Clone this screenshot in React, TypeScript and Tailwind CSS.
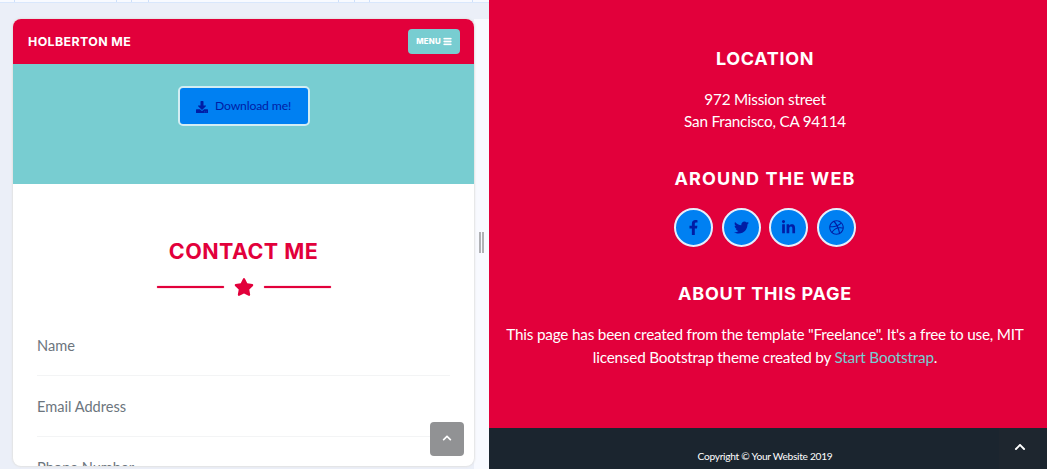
import React from "react";
import { FaBars, FaChevronUp, FaDownload, FaDribbble, FaFacebookF, FaLinkedinIn, FaStar, FaTwitter } from "react-icons/fa";

const socials = [FaFacebookF, FaTwitter, FaLinkedinIn, FaDribbble];

function RulerBar() {
  return (
    <div className="flex h-[3px] w-full border-b border-[#d9e7fc] bg-[#f8faff]">
      <div className="w-[15px] border-r border-[#cfe0fa]" />
      <div className="w-[102px] border-r border-[#cfe0fa]" />
      <div className="w-[15px] border-r border-[#cfe0fa]" />
      <div className="w-[17px] border-r border-[#cfe0fa]" />
      <div className="w-[190px] border-r border-[#cfe0fa]" />
      <div className="w-[16px] border-r border-[#cfe0fa]" />
      <div className="w-[15px] border-r border-[#cfe0fa]" />
      <div className="w-[103px] border-r border-[#cfe0fa]" />
    </div>
  );
}

function Field({ label }: { label: string }) {
  return (
    <div className="h-[61px] border-b border-[#f3f4f5] pt-[20px] text-[14.6px] leading-[22px] text-[#6c757d]">{label}</div>
  );
}

function PhonePreview() {
  return (
    <div className="relative ml-[13px] flex h-[447px] w-[461px] shrink-0 flex-col overflow-hidden rounded-[8px] bg-white shadow-[0_0_2px_1px_#e2e2e2]">
      <header className="flex h-[45px] shrink-0 items-center justify-between bg-[#e2003b] pr-[14px] pl-[15px]">
        <span className="pt-px font-[Inter] text-[12.4px] font-bold tracking-[0.38px] text-white">HOLBERTON ME</span>
        <button className="flex h-[25px] w-[52px] items-center justify-center gap-[2px] rounded-[4px] bg-[#78cdd1] font-[Inter] text-[7.8px] font-extrabold tracking-[0.25px] text-white">
          MENU <FaBars size={9} stroke="currentColor" strokeWidth={18} />
        </button>
      </header>
      <section className="flex h-[120px] shrink-0 items-start justify-center bg-[#78cdd1] pt-[22px]">
        <button className="flex h-[40px] w-[132px] items-center justify-center gap-[7px] rounded-[5px] border-2 border-[#d3edf3] bg-[#0080f2] pt-px text-[12.2px] tracking-[-0.15px] text-[#001da5]">
          <FaDownload size={12} />
          Download me!
        </button>
      </section>
      <section className="flex flex-col items-center pt-[51px]">
        <h2 className="font-[Inter] text-[21.5px] leading-[32px] font-bold tracking-[0.45px] whitespace-nowrap text-[#e2003b]">CONTACT ME</h2>
        <div className="mt-[10px] flex h-[20px] items-center gap-[10px] text-[#e2003b]">
          <span className="h-[2px] w-[67px] rounded-full bg-[#e2003b] shadow-[0_0_1px_#e2003b]" />
          <FaStar size={20} />
          <span className="h-[2px] w-[67px] rounded-full bg-[#e2003b] shadow-[0_0_1px_#e2003b]" />
        </div>
        <div className="mt-[18px] w-[413px]">
          <Field label="Name" />
          <Field label="Email Address" />
          <Field label="Phone Number" />
        </div>
      </section>
      <button className="absolute right-[10px] bottom-[10px] flex h-[34px] w-[34px] items-center justify-center rounded-[4px] bg-[#919294] pb-[3px] text-white">
        <FaChevronUp size={10} />
      </button>
    </div>
  );
}

function Footer() {
  return (
    <div className="flex h-full w-[558px] shrink-0 flex-col text-white">
      <footer className="flex h-[428px] shrink-0 flex-col items-center bg-[#e2003b] pt-[47px] pr-[6px] text-center">
        <h4 className="font-[Inter] text-[18px] leading-[24px] font-bold tracking-[0.65px]">LOCATION</h4>
        <p className="mt-[17px] text-[15.3px] leading-[22px] tracking-[-0.22px]">
          972 Mission street
          <br />
          San Francisco, CA 94114
        </p>
        <h4 className="mt-[35px] font-[Inter] text-[18px] leading-[24px] font-bold tracking-[1.1px]">AROUND THE WEB</h4>
        <div className="mt-[17px] flex gap-[8.5px]">
          {socials.map((Icon, i) => (
            <a key={i} className="flex h-[39px] w-[39px] items-center justify-center rounded-full border-2 border-[#e5effc] bg-[#0080f2] text-[#001da5]">
              <Icon size={15} />
            </a>
          ))}
        </div>
        <h4 className="mt-[35px] font-[Inter] text-[18px] leading-[24px] font-bold tracking-[0.75px]">ABOUT THIS PAGE</h4>
        <p className="mt-[17px] text-[15.3px] leading-[22.5px] tracking-[-0.2px] whitespace-nowrap">
          This page has been created from the template "Freelance". It's a free to use, MIT
          <br />
          licensed Bootstrap theme created by <a className="text-[#78cdd1]">Start Bootstrap</a>.
        </p>
      </footer>
      <div className="relative flex h-[41px] items-start justify-center bg-[#1b252f] pt-[20px] pr-[6px]">
        <small className="text-[10.2px] leading-[16px] tracking-[-0.28px]">Copyright © Your Website 2019</small>
        <a className="absolute top-0 right-[7px] flex h-[41px] w-[41px] items-center justify-center bg-[#1e262f] pb-[3px]">
          <FaChevronUp size={12} />
        </a>
      </div>
    </div>
  );
}

export default function App() {
  return (
    <main className="flex h-[469px] w-[1047px] overflow-hidden font-[Lato,sans-serif]">
      <div className="flex w-[489px] shrink-0 flex-col bg-[#ebeff8]">
        <RulerBar />
        <div className="mt-[16px] flex h-[450px]">
          <PhonePreview />
          <div className="flex h-[450px] w-[15px] items-center justify-center gap-px bg-[#f8faff] pb-[3px]">
            <span className="h-[21px] w-[2px] bg-[#b0b1b4]" />
            <span className="h-[21px] w-[2px] bg-[#b0b1b4]" />
          </div>
        </div>
      </div>
      <Footer />
    </main>
  );
}
